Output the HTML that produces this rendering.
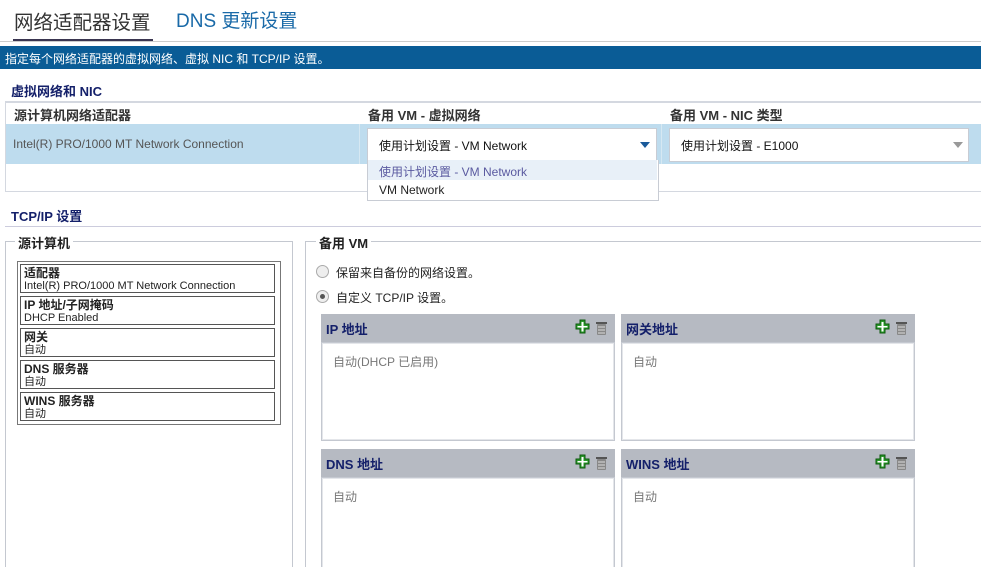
<!DOCTYPE html>
<html style="overflow:hidden;height:567px"><head><meta charset="utf-8"><style>
body{margin:0;width:981px;height:567px;overflow:hidden;background:#fff;font-family:"Liberation Sans","Noto Sans CJK SC",sans-serif;position:relative}
.a{position:absolute;white-space:nowrap}
.b{font-weight:bold}
.hd{position:absolute;background:#b6bac2;height:28px}
.hd span{position:absolute;left:5px;top:5px;font-size:13px;font-weight:bold;color:#14206a}
.bd{position:absolute;background:#fff;border:1px solid #c4c8d0;box-shadow:inset 0 0 0 1px #e4e6ea}
.bd span{position:absolute;left:11px;top:10px;font-size:12px;color:#777}
.it{position:absolute;left:3px;width:255px;height:29px;border:1px solid #555;font-size:11px;line-height:12px;color:#222;padding-left:3px;box-sizing:border-box;padding-top:2px}
.it b{font-size:12px}
</style></head><body>
<div class="a" style="left:14px;top:6px;font-size:19.5px;color:#333">网络适配器设置</div>
<div class="a" style="left:13px;top:39px;width:140px;height:3px;background:#3a3550"></div>
<div class="a" style="left:176px;top:6px;font-size:19px;color:#1a6aa8">DNS 更新设置</div>
<div class="a" style="left:0;top:41px;width:981px;height:1px;background:#ccc"></div>
<div class="a" style="left:0;top:46px;width:981px;height:23px;background:#0a5c96"></div>
<div class="a" style="left:5px;top:50px;font-size:12px;color:#fff">指定每个网络适配器的虚拟网络、虚拟 NIC 和 TCP/IP 设置。</div>
<div class="a b" style="left:11px;top:81px;font-size:13px;color:#14206a">虚拟网络和 NIC</div>
<div class="a" style="left:5px;top:101px;width:976px;height:88px;border-top:2px solid #d4d8e0;border-left:1px solid #d4d8e0;border-bottom:1px solid #d4d8e0"></div>
<div class="a b" style="left:14px;top:105px;font-size:13px;color:#333">源计算机网络适配器</div>
<div class="a b" style="left:368px;top:105px;font-size:13px;color:#333">备用 VM - 虚拟网络</div>
<div class="a b" style="left:670px;top:105px;font-size:13px;color:#333">备用 VM - NIC 类型</div>
<div class="a" style="left:6px;top:124px;width:975px;height:40px;background:#bedcee"></div>
<div class="a" style="left:359px;top:124px;width:1px;height:40px;background:#d6e8f2"></div>
<div class="a" style="left:661px;top:124px;width:1px;height:40px;background:#d6e8f2"></div>
<div class="a" style="left:13px;top:137px;font-size:12px;color:#555">Intel(R) PRO/1000 MT Network Connection</div>
<div class="a" style="left:367px;top:128px;width:288px;height:32px;background:#fff;border:1px solid #c8ccd4"></div>
<div class="a" style="left:379px;top:137px;font-size:12px;color:#111">使用计划设置 - VM Network</div>
<div class="a" style="left:640px;top:142px;width:0;height:0;border-left:5px solid transparent;border-right:5px solid transparent;border-top:6px solid #1a5a9a"></div>
<div class="a" style="left:669px;top:128px;width:298px;height:32px;background:#fff;border:1px solid #c8ccd4"></div>
<div class="a" style="left:681px;top:137px;font-size:12px;color:#111">使用计划设置 - E1000</div>
<div class="a" style="left:953px;top:142px;width:0;height:0;border-left:5px solid transparent;border-right:5px solid transparent;border-top:6px solid #999"></div>
<div class="a" style="left:367px;top:160px;width:290px;height:40px;background:#fff;border:1px solid #c8ccd4;border-top:none"></div>
<div class="a" style="left:368px;top:160px;width:289px;height:20px;background:#e8f0f8"></div>
<div class="a" style="left:379px;top:163px;font-size:12px;color:#5a5aa0">使用计划设置 - VM Network</div>
<div class="a" style="left:379px;top:183px;font-size:12px;color:#222">VM Network</div>
<div class="a b" style="left:11px;top:206px;font-size:13px;color:#14206a">TCP/IP 设置</div>
<div class="a" style="left:5px;top:226px;width:976px;height:1px;background:#ccd"></div>
<div class="a" style="left:5px;top:241px;width:286px;height:326px;border:1px solid #c4c8d0;border-bottom:none"></div>
<div class="a b" style="left:15px;top:233px;font-size:13px;color:#222;background:#fff;padding:0 3px">源计算机</div>
<div class="a" style="left:17px;top:261px;width:262px;height:162px;border:1px solid #777"></div>
<div class="it" style="left:20px;top:264px"><b>适配器</b><br>Intel(R) PRO/1000 MT Network Connection</div>
<div class="it" style="left:20px;top:296px"><b>IP 地址/子网掩码</b><br>DHCP Enabled</div>
<div class="it" style="left:20px;top:328px"><b>网关</b><br>自动</div>
<div class="it" style="left:20px;top:360px"><b>DNS 服务器</b><br>自动</div>
<div class="it" style="left:20px;top:392px"><b>WINS 服务器</b><br>自动</div>
<div class="a" style="left:305px;top:241px;width:680px;height:326px;border:1px solid #c4c8d0;border-bottom:none"></div>
<div class="a b" style="left:316px;top:233px;font-size:13px;color:#222;background:#fff;padding:0 3px">备用 VM</div>
<div class="a" style="left:316px;top:265px;width:11px;height:11px;border-radius:50%;border:1px solid #aaa;background:#eee"></div>
<div class="a" style="left:336px;top:264px;font-size:12px;color:#222">保留来自备份的网络设置。</div>
<div class="a" style="left:316px;top:290px;width:11px;height:11px;border-radius:50%;border:1px solid #aaa;background:#eee"></div>
<div class="a" style="left:320px;top:294px;width:5px;height:5px;border-radius:50%;background:#555"></div>
<div class="a" style="left:336px;top:289px;font-size:12px;color:#222">自定义 TCP/IP 设置。</div>

<div class="hd" style="left:321px;top:314px;width:294px"><span>IP 地址</span></div>
<div class="bd" style="left:321px;top:342px;width:292px;height:97px"><span>自动(DHCP 已启用)</span></div>
<div class="hd" style="left:621px;top:314px;width:294px"><span>网关地址</span></div>
<div class="bd" style="left:621px;top:342px;width:292px;height:97px"><span>自动</span></div>
<div class="hd" style="left:321px;top:449px;width:294px"><span>DNS 地址</span></div>
<div class="bd" style="left:321px;top:477px;width:292px;height:100px"><span>自动</span></div>
<div class="hd" style="left:621px;top:449px;width:294px"><span>WINS 地址</span></div>
<div class="bd" style="left:621px;top:477px;width:292px;height:100px"><span>自动</span></div>

<svg class="a" style="left:575px;top:319px" width="34" height="18"><path d="M5 1h5v4h4v5h-4v4h-5v-4h-4v-5h4z" fill="#2a9a2a" stroke="#0d5a0d"/><path d="M6.5 3h2v4h4v1.5h-4v4h-2v-4h-4v-1.5h4z" fill="#fff"/><rect x="22" y="5" width="9" height="11" rx="1" fill="#888"/><rect x="21" y="3" width="11" height="2" fill="#555"/><path d="M23 8h7M23 11h7M23 14h7" stroke="#ddd"/></svg>
<svg class="a" style="left:875px;top:319px" width="34" height="18"><path d="M5 1h5v4h4v5h-4v4h-5v-4h-4v-5h4z" fill="#2a9a2a" stroke="#0d5a0d"/><path d="M6.5 3h2v4h4v1.5h-4v4h-2v-4h-4v-1.5h4z" fill="#fff"/><rect x="22" y="5" width="9" height="11" rx="1" fill="#888"/><rect x="21" y="3" width="11" height="2" fill="#555"/><path d="M23 8h7M23 11h7M23 14h7" stroke="#ddd"/></svg>
<svg class="a" style="left:575px;top:454px" width="34" height="18"><path d="M5 1h5v4h4v5h-4v4h-5v-4h-4v-5h4z" fill="#2a9a2a" stroke="#0d5a0d"/><path d="M6.5 3h2v4h4v1.5h-4v4h-2v-4h-4v-1.5h4z" fill="#fff"/><rect x="22" y="5" width="9" height="11" rx="1" fill="#888"/><rect x="21" y="3" width="11" height="2" fill="#555"/><path d="M23 8h7M23 11h7M23 14h7" stroke="#ddd"/></svg>
<svg class="a" style="left:875px;top:454px" width="34" height="18"><path d="M5 1h5v4h4v5h-4v4h-5v-4h-4v-5h4z" fill="#2a9a2a" stroke="#0d5a0d"/><path d="M6.5 3h2v4h4v1.5h-4v4h-2v-4h-4v-1.5h4z" fill="#fff"/><rect x="22" y="5" width="9" height="11" rx="1" fill="#888"/><rect x="21" y="3" width="11" height="2" fill="#555"/><path d="M23 8h7M23 11h7M23 14h7" stroke="#ddd"/></svg>
</body></html>
